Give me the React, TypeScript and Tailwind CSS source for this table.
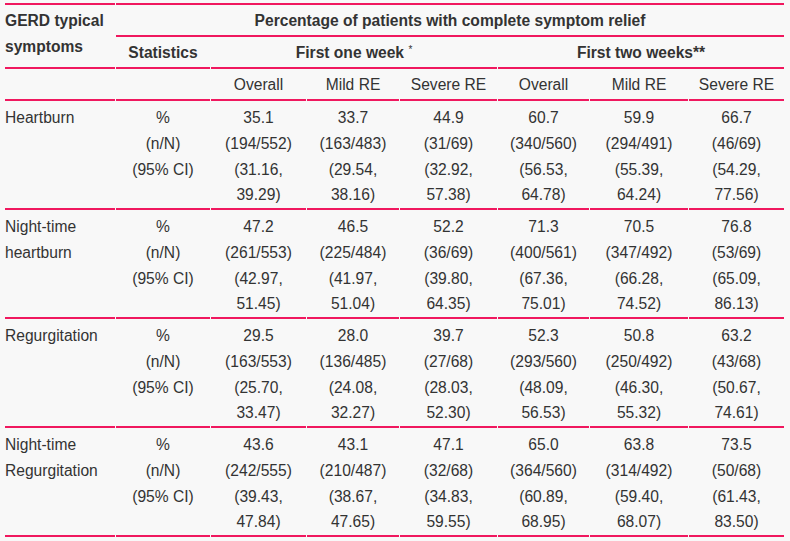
type Cell = [string, string, string, string];

const rows: { label: string[]; cells: Cell[] }[] = [
  {
    label: ["Heartburn"],
    cells: [
      ["35.1", "(194/552)", "(31.16,", "39.29)"],
      ["33.7", "(163/483)", "(29.54,", "38.16)"],
      ["44.9", "(31/69)", "(32.92,", "57.38)"],
      ["60.7", "(340/560)", "(56.53,", "64.78)"],
      ["59.9", "(294/491)", "(55.39,", "64.24)"],
      ["66.7", "(46/69)", "(54.29,", "77.56)"],
    ],
  },
  {
    label: ["Night-time", "heartburn"],
    cells: [
      ["47.2", "(261/553)", "(42.97,", "51.45)"],
      ["46.5", "(225/484)", "(41.97,", "51.04)"],
      ["52.2", "(36/69)", "(39.80,", "64.35)"],
      ["71.3", "(400/561)", "(67.36,", "75.01)"],
      ["70.5", "(347/492)", "(66.28,", "74.52)"],
      ["76.8", "(53/69)", "(65.09,", "86.13)"],
    ],
  },
  {
    label: ["Regurgitation"],
    cells: [
      ["29.5", "(163/553)", "(25.70,", "33.47)"],
      ["28.0", "(136/485)", "(24.08,", "32.27)"],
      ["39.7", "(27/68)", "(28.03,", "52.30)"],
      ["52.3", "(293/560)", "(48.09,", "56.53)"],
      ["50.8", "(250/492)", "(46.30,", "55.32)"],
      ["63.2", "(43/68)", "(50.67,", "74.61)"],
    ],
  },
  {
    label: ["Night-time", "Regurgitation"],
    cells: [
      ["43.6", "(242/555)", "(39.43,", "47.84)"],
      ["43.1", "(210/487)", "(38.67,", "47.65)"],
      ["47.1", "(32/68)", "(34.83,", "59.55)"],
      ["65.0", "(364/560)", "(60.89,", "68.95)"],
      ["63.8", "(314/492)", "(59.40,", "68.07)"],
      ["73.5", "(50/68)", "(61.43,", "83.50)"],
    ],
  },
];

const subHeads = ["Overall", "Mild RE", "Severe RE", "Overall", "Mild RE", "Severe RE"];

function Lines({ items }: { items: string[] }) {
  return (
    <>
      {items.map((t, i) => (
        <div key={i}>{t}</div>
      ))}
    </>
  );
}

export default function App() {
  const line = "border-b-2 border-[#f0185f]";
  const head = "pt-[3px] pb-[1px] px-0 font-bold " + line;
  const body = "pt-[4px] px-0 align-top leading-[25.75px] " + line;

  return (
    <div
      className="min-h-[541px] w-[790px] bg-[#f8f8f8] pt-[3px] text-[#333] text-[15.6px] leading-[26px]"
      style={{ fontFamily: '"Liberation Sans", Arial, sans-serif' }}
    >
      <table className="ml-[4px] w-[781px] table-fixed border-separate border-spacing-x-[1px] border-spacing-y-0">
        <colgroup>
          <col className="w-[110px]" />
          <col className="w-[94px]" />
          <col className="w-[95px]" />
          <col className="w-[92px]" />
          <col className="w-[97px]" />
          <col className="w-[91px]" />
          <col className="w-[98px]" />
          <col className="w-[95px]" />
        </colgroup>
        <thead>
          <tr>
            <th
              rowSpan={2}
              className={"border-t-2 border-[#f0185f] text-left align-top " + head}
            >
              GERD typical
              <br />
              symptoms
            </th>
            <th colSpan={7} className={"border-t-2 text-center align-top " + head}>
              Percentage of patients with complete symptom relief
            </th>
          </tr>
          <tr>
            <th className={"text-center " + head}>Statistics</th>
            <th colSpan={3} className={"text-center " + head}>
              First one week <sup className="text-[10px] font-normal">*</sup>
            </th>
            <th colSpan={3} className={"text-center " + head}>
              First two weeks**
            </th>
          </tr>
          <tr>
            <th className={line}></th>
            <th className={line}></th>
            {subHeads.map((s, i) => (
              <th key={i} className={"pt-[3px] pb-[1px] px-0 text-center font-normal " + line}>
                {s}
              </th>
            ))}
          </tr>
        </thead>
        <tbody>
          {rows.map((r, ri) => (
            <tr key={ri}>
              <td className={"text-left " + body}>
                <Lines items={r.label} />
              </td>
              <td className={"text-center " + body}>
                <Lines items={["%", "(n/N)", "(95% CI)"]} />
              </td>
              {r.cells.map((c, ci) => (
                <td key={ci} className={"text-center " + body}>
                  <Lines items={c} />
                </td>
              ))}
            </tr>
          ))}
        </tbody>
      </table>
    </div>
  );
}
